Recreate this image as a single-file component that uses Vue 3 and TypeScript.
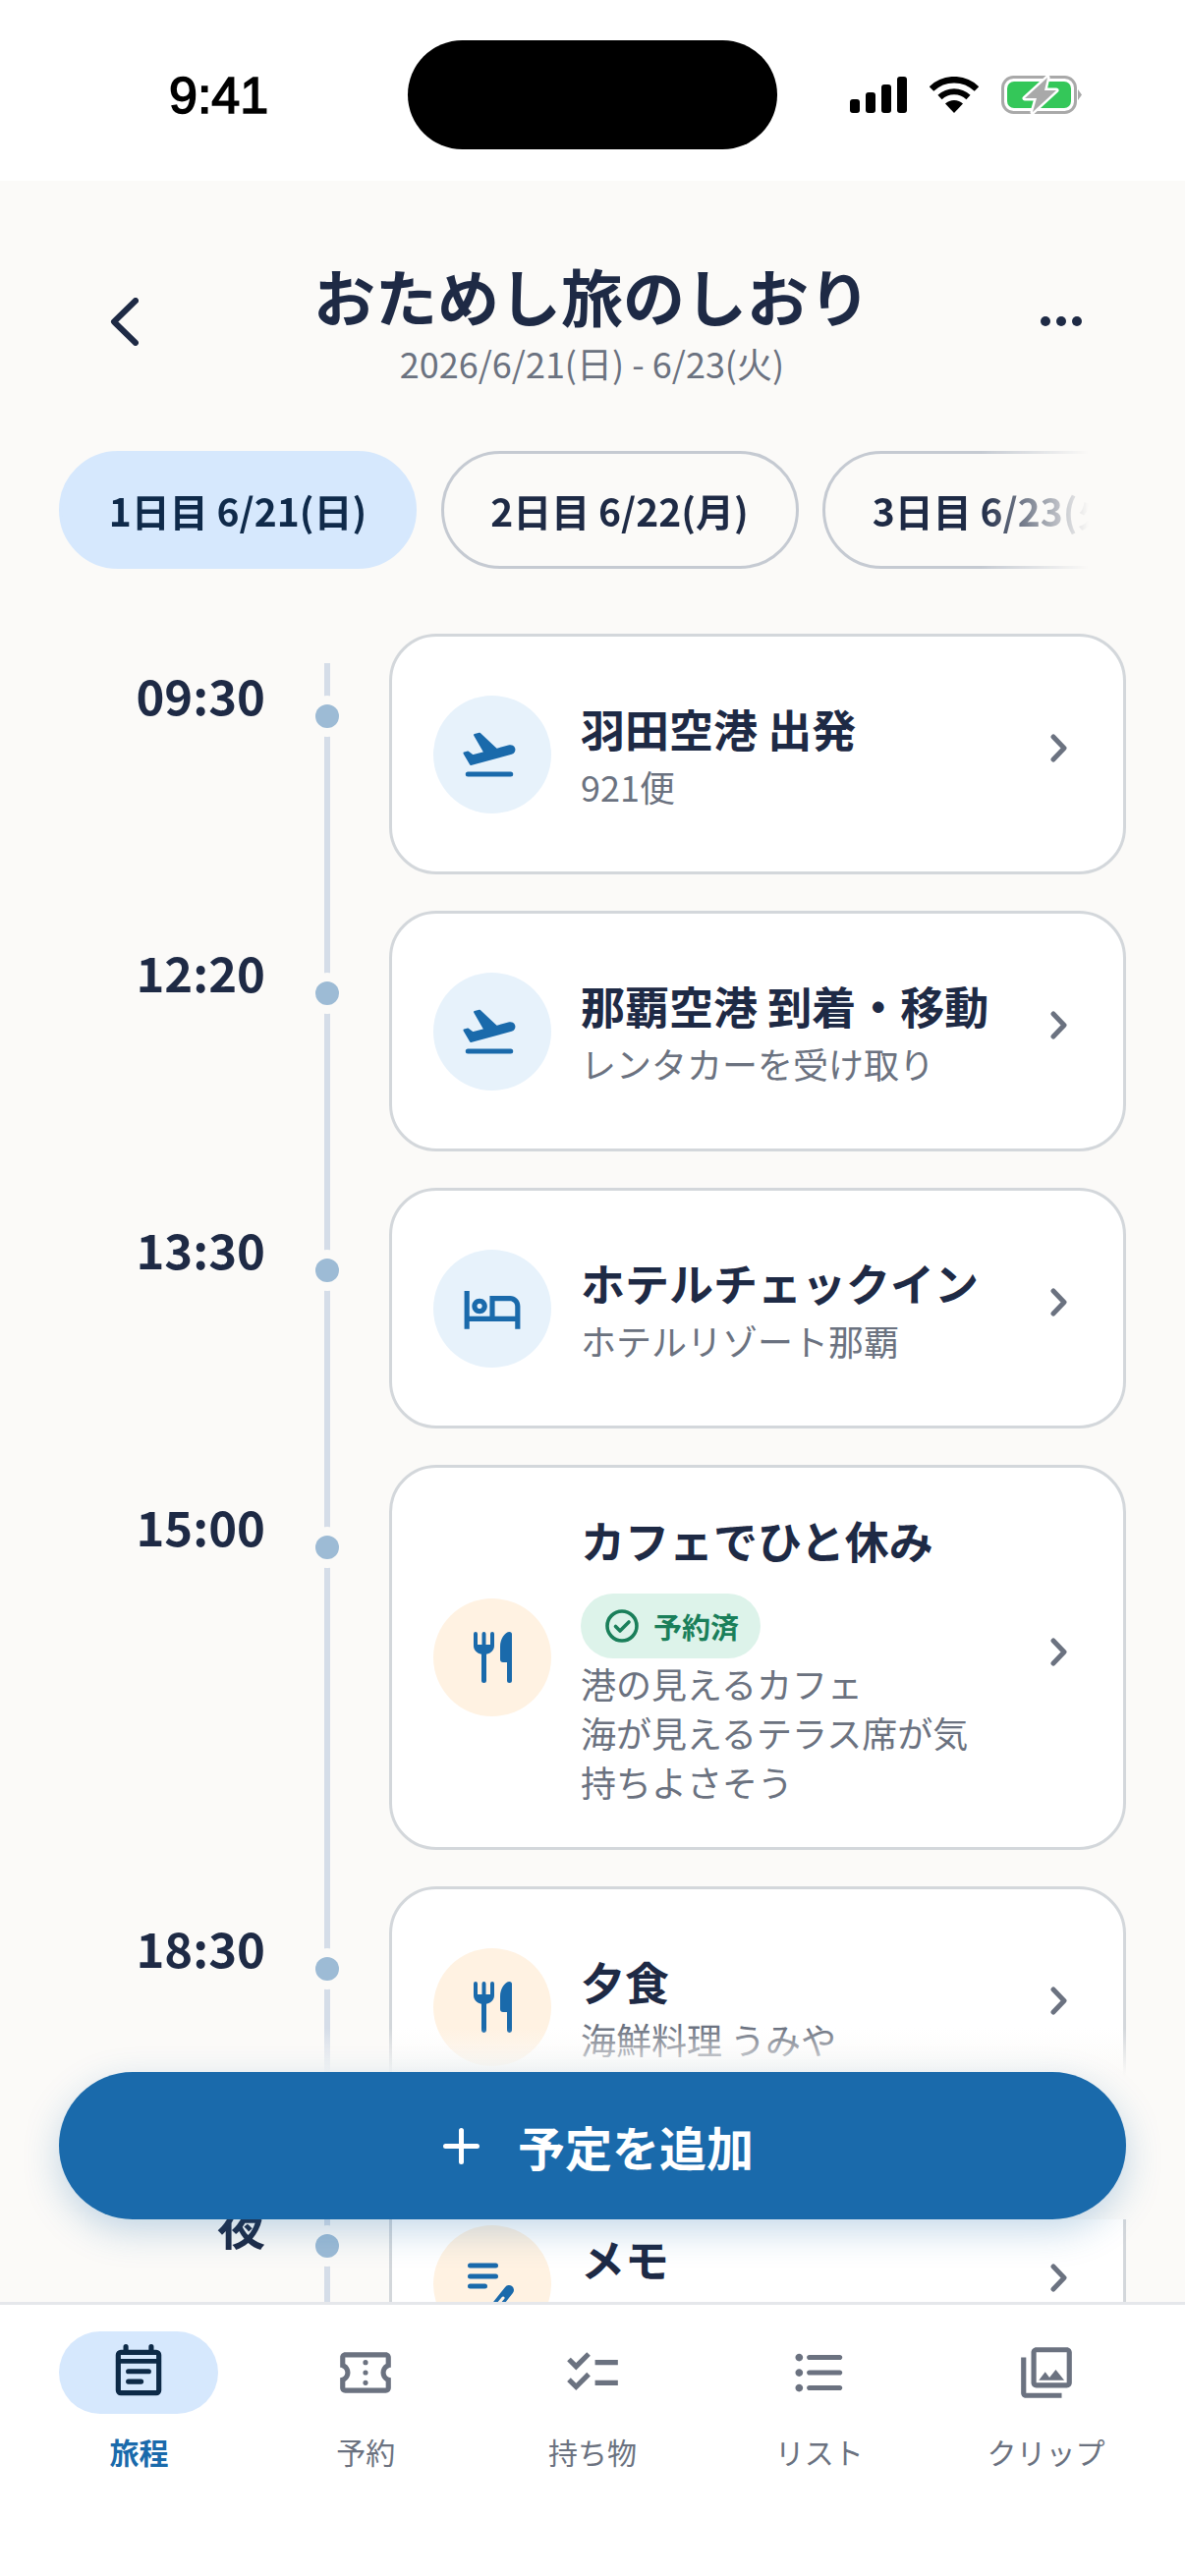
<template>
  <div class="phone">
    <div class="status">
      <div class="status-left"><span class="clock">9:41</span></div>
      <div class="island"></div>
      <div class="status-right">
        <svg width="58" height="37" viewBox="0 0 58 37" fill="#000">
          <rect x="0" y="23" width="10" height="14" rx="3" />
          <rect x="16" y="16" width="10" height="21" rx="3" />
          <rect x="32" y="8" width="10" height="29" rx="3" />
          <rect x="48" y="0" width="10" height="37" rx="3" />
        </svg>
        <svg width="50" height="37" viewBox="0 0 50 37" fill="none" stroke="#000">
          <path d="M2 12.5a33 33 0 0 1 46 0" stroke-width="6.5" />
          <path d="M10.500 21a21 21 0 0 1 29 0" stroke-width="6" />
          <path d="M25 37 L16 27.500 a13 13 0 0 1 18 0z" fill="#000" stroke="none" />
        </svg>
        <svg width="82" height="39" viewBox="0 0 82 39" fill="none">
          <rect x="1.500" y="1.500" width="74" height="36" rx="11" stroke="#a9a9a9" stroke-width="3" />
          <rect x="6" y="6" width="65" height="27" rx="7" fill="#34c759" />
          <path d="M78 14l4 5.500-4 5.500z" fill="#a9a9a9" />
          <path d="M47 2L24 23h12l-4 14 24-22H44z" fill="#a9a9a9" stroke="#fff" stroke-width="5" stroke-linejoin="round" paint-order="stroke" />
        </svg>
      </div>
    </div>

    <header class="head">
      <svg class="back" width="29" height="49" viewBox="0 0 29 49" fill="none">
        <path d="M26 3L4 24.500 26 46" stroke="#1e2a45" stroke-width="6" stroke-linecap="round" stroke-linejoin="round" />
      </svg>
      <div class="head-text">
        <h1>おためし旅のしおり</h1>
        <p>2026/6/21(日) - 6/23(火)</p>
      </div>
      <svg class="more" width="42" height="10" viewBox="0 0 42 10" fill="#1e2a45">
        <circle cx="5" cy="5" r="5" />
        <circle cx="21" cy="5" r="5" />
        <circle cx="37" cy="5" r="5" />
      </svg>
    </header>

    <div class="days">
      <div v-for="(d, i) in days" :key="d" class="day" :class="{ on: i === 0 }">{{ d }}</div>
    </div>

    <main class="plan">
      <div v-for="(item, i) in items" :key="item.title" class="row">
        <div class="time">{{ item.time }}</div>
        <div class="rail" :class="{ first: i === 0 }"><span class="dot"></span></div>
        <div class="card">
          <div class="badge-icon" :class="item.tone">
            <svg v-if="item.icon === 'fork'" width="39" height="52" viewBox="0 0 39 52" fill="#1a6aab">
              <path d="M0 2a2 2 0 0 1 4 0v11h4.500V2a2 2 0 0 1 4 0v11H17V2a2 2 0 0 1 4 0v12c0 4.500-3.400 8-8 8.700V49.500a2.500 2.500 0 0 1-5 0V22.700C3.400 22 0 18.500 0 14z" />
              <path d="M39 2.500V49.500a2.500 2.500 0 0 1-5 0V31h-4a3 3 0 0 1-3-3V15C27 7 32 0 36.500 0A2.500 2.500 0 0 1 39 2.500z" />
            </svg>
            <svg v-else-if="item.icon === 'memo'" width="54" height="54" viewBox="0 0 54 54" fill="none" stroke="#1a6aab" stroke-linecap="round">
              <path d="M4.500 8h26M4.500 19h26M4.500 29h15" stroke-width="5" />
              <path d="M44 33L32 48" stroke-width="10" />
              <path d="M38 41L33 47" stroke="#fff2e2" stroke-width="3" />
            </svg>
            <svg v-else-if="item.icon === 'bed'" width="62" height="62" viewBox="0 0 24 24" fill="#1a6aab">
              <path :d="bedPath" />
            </svg>
            <svg v-else class="plane" width="60" height="60" viewBox="0 0 24 24" fill="#1a6aab" stroke="#1a6aab" stroke-linejoin="round" stroke-linecap="round">
              <path :d="planePath" stroke-width=".9" />
              <path d="M3.300 20h17.400" stroke-width="2" />
            </svg>
          </div>
          <div class="body">
            <div class="title">{{ item.title }}</div>
            <div v-if="item.reserved" class="reserved">
              <svg width="34" height="34" viewBox="0 0 34 34" fill="none" stroke="#1a7f5a" stroke-width="3.600" stroke-linecap="round" stroke-linejoin="round">
                <circle cx="17" cy="17" r="15" />
                <path d="M10.500 17.500l4.500 4.500 9-9" />
              </svg>
              <span>予約済</span>
            </div>
            <div v-for="line in item.sub" :key="line" class="sub">{{ line }}</div>
          </div>
          <svg class="go" width="17" height="29" viewBox="0 0 17 29" fill="none">
            <path d="M3 3l11 11.500L3 26" stroke="#6b7280" stroke-width="5" stroke-linecap="round" stroke-linejoin="round" />
          </svg>
        </div>
      </div>

      <div class="add-wrap">
        <button class="add" type="button">
          <svg width="37" height="37" viewBox="0 0 37 37" fill="none" stroke="#fff" stroke-width="5" stroke-linecap="round">
            <path d="M18.500 2.500v32M2.500 18.500h32" />
          </svg>
          <span>予定を追加</span>
        </button>
      </div>
    </main>

    <nav class="tabs">
      <div v-for="(t, i) in tabs" :key="t.label" class="tab" :class="{ on: i === 0 }">
        <div class="tab-icon">
          <svg v-if="i === 0" width="62" height="62" viewBox="0 0 24 24" fill="none" stroke="#0d2a47" stroke-width="2" stroke-linecap="round">
            <path d="M7 1.800V4M17 1.800V4" />
            <rect x="4" y="4" width="16" height="16" rx="1" stroke-linejoin="round" />
            <path d="M4 7.500h16" stroke-width="1.800" />
            <path d="M8 11.500h8M8 15.500h5" />
          </svg>
          <svg v-else width="62" height="62" viewBox="0 0 24 24" fill="#6b7280">
            <path :d="t.d" />
          </svg>
        </div>
        <div class="tab-label">{{ t.label }}</div>
      </div>
    </nav>
  </div>
</template>

<script setup lang="ts">
interface PlanItem {
  time: string
  title: string
  sub: string[]
  icon: string
  tone: string
  reserved?: boolean
}

const planePath =
  'M22.070 9.640c-.21-.8-1.040-1.280-1.840-1.060L14.920 10l-6.900-6.430-1.930.51 4.140 7.170-4.970 1.330-1.970-1.540-1.450.39 2.590 4.490s7.120-1.900 16.570-4.430c.81-.23 1.280-1.050 1.070-1.850z'
const bedPath =
  'M7 14c1.660 0 3-1.340 3-3S8.660 8 7 8s-3 1.340-3 3 1.340 3 3 3zm0-4c.55 0 1 .45 1 1s-.45 1-1 1-1-.45-1-1 .45-1 1-1zm12-3h-8v8H3V5H1v15h2v-3h18v3h2v-9c0-2.210-1.790-4-4-4zm2 8h-8V9h6c1.100 0 2 .9 2 2v4z'

const days = ['1日目 6/21(日)', '2日目 6/22(月)', '3日目 6/23(火)']

const items: PlanItem[] = [
  { time: '09:30', title: '羽田空港 出発', sub: ['921便'], icon: 'plane', tone: 'blue' },
  { time: '12:20', title: '那覇空港 到着・移動', sub: ['レンタカーを受け取り'], icon: 'plane', tone: 'blue' },
  { time: '13:30', title: 'ホテルチェックイン', sub: ['ホテルリゾート那覇'], icon: 'bed', tone: 'blue' },
  {
    time: '15:00',
    title: 'カフェでひと休み',
    sub: ['港の見えるカフェ', '海が見えるテラス席が気持ちよさそう'],
    icon: 'fork',
    tone: 'orange',
    reserved: true,
  },
  { time: '18:30', title: '夕食', sub: ['海鮮料理 うみや'], icon: 'fork', tone: 'orange' },
  { time: '夜', title: 'メモ', sub: ['\u00a0'], icon: 'memo', tone: 'orange' },
]

const tabs = [
  { label: '旅程', d: '' },
  {
    label: '予約',
    d: 'M22 10V6c0-1.110-.9-2-2-2H4c-1.100 0-1.990.89-1.990 2v4c1.100 0 1.990.9 1.990 2s-.89 2-2 2v4c0 1.100.9 2 2 2h16c1.100 0 2-.9 2-2v-4c-1.100 0-2-.9-2-2s.9-2 2-2zm-2-1.460c-1.190.69-2 1.990-2 3.460s.81 2.770 2 3.460V18H4v-2.540c1.190-.69 2-1.990 2-3.460 0-1.480-.8-2.770-1.990-3.460L4 6h16v2.540zM12 7a1 1 0 1 1 0 2 1 1 0 0 1 0-2zm0 4a1 1 0 1 1 0 2 1 1 0 0 1 0-2zm0 4a1 1 0 1 1 0 2 1 1 0 0 1 0-2z',
  },
  {
    label: '持ち物',
    d: 'M22 7h-9v2h9V7zm0 8h-9v2h9v-2zM5.540 11 2 7.460l1.410-1.410 2.120 2.120 4.240-4.240 1.410 1.410L5.540 11zm0 8L2 15.460l1.410-1.410 2.120 2.120 4.240-4.240 1.410 1.410L5.540 19z',
  },
  {
    label: 'リスト',
    d: 'M4 10.500c-.83 0-1.500.67-1.500 1.500s.67 1.500 1.500 1.500 1.500-.67 1.500-1.500-.67-1.500-1.500-1.500zm0-6c-.83 0-1.500.67-1.500 1.500S3.170 7.500 4 7.500 5.500 6.830 5.500 6 4.830 4.500 4 4.500zm0 12c-.83 0-1.500.68-1.500 1.500s.68 1.500 1.500 1.500 1.500-.68 1.500-1.500-.67-1.500-1.500-1.500zM8 19h12c.55 0 1-.45 1-1s-.45-1-1-1H8c-.55 0-1 .45-1 1s.45 1 1 1zm0-6h12c.55 0 1-.45 1-1s-.45-1-1-1H8c-.55 0-1 .45-1 1s.45 1 1 1zM7 6c0 .55.45 1 1 1h12c.55 0 1-.45 1-1s-.45-1-1-1H8c-.55 0-1 .45-1 1z',
  },
  {
    label: 'クリップ',
    d: 'M20 4v12H8V4h12m0-2H8c-1.100 0-2 .9-2 2v12c0 1.100.9 2 2 2h12c1.100 0 2-.9 2-2V4c0-1.100-.9-2-2-2zm-8.500 9.670l1.690 2.260 2.480-3.100L19 15H9zM2 6v14c0 1.100.9 2 2 2h14v-2H4V6H2z',
  },
]
</script>

<style scoped>
.phone {
  --ink: #1e2a45;
  --paper: #fbfaf8;
  width: 1206px;
  height: 2622px;
  display: flex;
  flex-direction: column;
  overflow: hidden;
  background: var(--paper);
  color: var(--ink);
  font-family: "Noto Sans CJK JP", "Noto Sans", sans-serif;
}

/* Status bar */
.status {
  height: 184px;
  flex: none;
  box-sizing: border-box;
  padding-top: 9px;
  display: flex;
  align-items: center;
  background: #fff;
}

.status-left {
  width: 415px;
  padding-left: 172px;
  box-sizing: border-box;
}

.clock {
  font-family: "Liberation Sans", sans-serif;
  font-size: 52px;
  color: #000;
  -webkit-text-stroke: 1.6px #000;
}

.island {
  width: 376px;
  height: 111px;
  border-radius: 56px;
  background: #000;
}

.status-right {
  display: flex;
  align-items: center;
  gap: 23px;
  padding-left: 74px;
}

/* Header */
.head {
  flex: none;
  display: flex;
  align-items: center;
  justify-content: space-between;
  padding: 74px 105px 0 100px;
}

.back {
  margin-left: 12px;
}

.head-text {
  flex: 1;
  padding-left: 5px;
  text-align: center;
}

h1 {
  margin: 0;
  font-size: 63px;
  line-height: 84px;
  font-weight: 700;
}

.head-text p {
  margin: 0;
  font-size: 36px;
  line-height: 54px;
  color: #6b7280;
}

/* Day pills */
.days {
  flex: none;
  display: flex;
  gap: 24.500px;
  width: 1048px;
  margin: 63px 0 0 60px;
  overflow: hidden;
  -webkit-mask-image: linear-gradient(to right, #000 calc(100% - 110px), transparent);
  mask-image: linear-gradient(to right, #000 calc(100% - 110px), transparent);
}

.day {
  flex: none;
  width: 364px;
  height: 120px;
  box-sizing: border-box;
  display: flex;
  align-items: center;
  justify-content: center;
  border: 3px solid #c5cad2;
  border-radius: 60px;
  font-size: 39px;
  font-weight: 700;
  white-space: nowrap;
}

.day.on {
  border-color: #d6e8fd;
  background: #d6e8fd;
  color: #0f2a4a;
}

/* Timeline */
.plan {
  position: relative;
  flex: 1;
  min-height: 0;
  overflow: hidden;
  padding-top: 66px;
}

.row {
  display: grid;
  grid-template-columns: 268px 128px 750px;
  margin-bottom: 37px;
}

.time {
  padding-top: 29px;
  margin-right: -2px;
  font-size: 49px;
  line-height: 66px;
  font-weight: 700;
  text-align: right;
}

.rail {
  position: relative;
}

.rail::before {
  content: "";
  position: absolute;
  left: 62px;
  top: 0;
  bottom: -37px;
  width: 6px;
  background: #d5dde8;
}

.rail.first::before {
  top: 30px;
}

.dot {
  position: absolute;
  left: 53px;
  top: 72px;
  width: 24px;
  height: 24px;
  border-radius: 50%;
  background: #9dbbd5;
  box-shadow: 0 0 0 9px var(--paper);
}

.card {
  min-height: 245px;
  box-sizing: border-box;
  display: flex;
  align-items: center;
  padding: 42px 57px 42px 42px;
  border: 3px solid #d3d7db;
  border-radius: 48px;
  background: #fff;
}

.badge-icon {
  flex: none;
  width: 120px;
  height: 120px;
  margin-right: 30px;
  border-radius: 50%;
  display: flex;
  align-items: center;
  justify-content: center;
}

.badge-icon.blue {
  background: #e7f2fb;
}

.badge-icon.orange {
  background: #fff2e2;
}

.plane {
  margin-right: 7px;
}

.body {
  flex: 1;
  min-width: 0;
  margin: -2px 50px 0 0;
}

.title {
  font-size: 45px;
  line-height: 67px;
  font-weight: 700;
  white-space: nowrap;
}

.sub {
  font-size: 36px;
  line-height: 50px;
  color: #6b7280;
}

.reserved {
  display: inline-flex;
  align-items: center;
  gap: 15px;
  height: 66px;
  margin-top: 21px;
  padding: 0 22px 0 25px;
  border-radius: 33px;
  background: #ddf3ea;
  color: #1a7f5a;
  font-size: 29px;
  font-weight: 700;
  vertical-align: top;
}

.go {
  flex: none;
  margin-top: -12px;
}

/* Add button */
.add-wrap {
  position: absolute;
  left: 0;
  right: 0;
  bottom: 84px;
  height: 195px;
  display: flex;
  align-items: flex-end;
  justify-content: center;
  background: linear-gradient(to bottom, rgba(251, 250, 248, 0), var(--paper) 25%);
}

.add {
  width: 1086px;
  height: 150px;
  display: flex;
  align-items: center;
  justify-content: center;
  gap: 39px;
  padding: 0 0 0 12px;
  border: 0;
  border-radius: 75px;
  background: #1a6aab;
  color: #fff;
  font-family: inherit;
  font-size: 48px;
  font-weight: 700;
  box-shadow: 0 12px 36px rgba(26, 106, 171, 0.25);
}

/* Bottom tabs */
.tabs {
  flex: none;
  height: 279px;
  box-sizing: border-box;
  display: flex;
  padding: 27px 26px 0;
  border-top: 3px solid #e5e7eb;
  background: #fff;
}

.tab {
  flex: 1;
  display: flex;
  flex-direction: column;
  align-items: center;
  color: #6b7280;
}

.tab-icon {
  width: 162px;
  height: 84px;
  display: flex;
  align-items: center;
  justify-content: center;
  border-radius: 42px;
}

.tab.on .tab-icon {
  background: #d6e8fd;
}

.tab-label {
  margin-top: 17px;
  font-size: 30px;
  line-height: 42px;
}

.tab.on .tab-label {
  color: #1a6aab;
  font-weight: 700;
}
</style>
